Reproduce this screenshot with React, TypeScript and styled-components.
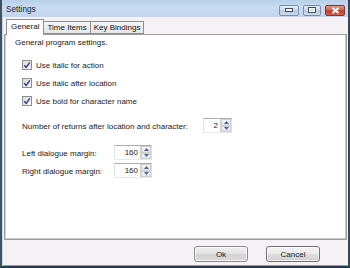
import React from "react";
import styled, { createGlobalStyle } from "styled-components";

const GlobalStyle = createGlobalStyle`
  html, body { margin: 0; padding: 0; }
  body {
    width: 350px; height: 268px; overflow: hidden;
    font-family: "Liberation Sans", Arial, sans-serif;
    font-size: 8px; color: #1a1a1a;
  }
  * { box-sizing: border-box; }
`;

const Window = styled.div`
  width: 350px;
  height: 268px;
  display: flex;
  flex-direction: column;
  background: #c3d7ee;
  border-left: 2px solid #44515f;
  border-right: 2px solid #3a4756;
  border-bottom: 2px solid #2a3a4c;
`;

const TitleBar = styled.div`
  height: 17px;
  flex: none;
  display: flex;
  align-items: center;
  padding: 0 3px 0 4px;
  background: linear-gradient(#b7cfe9, #c8dbf0 40%, #c0d5ed);
`;

const Title = styled.span`
  flex: 1;
  font-size: 8.2px;
  color: #1c2430;
  padding-top: 2px;
`;

const CaptionGroup = styled.div`
  display: flex;
  align-items: center;
  gap: 4px;
  margin-top: 3px;
`;

const CaptionButton = styled.div<{ $w: number; $close?: boolean }>`
  width: ${(p) => p.$w}px;
  height: 11px;
  border-radius: 2px;
  border: 1px solid ${(p) => (p.$close ? "#7a3a34" : "#7b8ea8")};
  background: ${(p) =>
    p.$close
      ? "linear-gradient(#e59a8a, #d0604c 45%, #c23a26 55%, #d2644a)"
      : "linear-gradient(#e6eef8, #cdd9e9 45%, #b9c9de 55%, #cfdcec)"};
  display: flex;
  align-items: center;
  justify-content: center;
`;

const Body = styled.div`
  flex: 1;
  display: flex;
  flex-direction: column;
  margin: 0 0 0 1px;
  padding: 1px 1px 0 1px;
  background: #f5f1f5;
  border-bottom: 1px solid #3fbde9;
`;

const TabStrip = styled.div`
  display: flex;
  align-items: flex-end;
  padding-left: 2px;
  height: 16px;
  position: relative;
  z-index: 1;
`;

const Tab = styled.div<{ $active?: boolean }>`
  height: ${(p) => (p.$active ? 16 : 13)}px;
  padding: ${(p) => (p.$active ? "2px 4px 0" : "1px 3px 0")};
  margin-bottom: ${(p) => (p.$active ? -1 : 0)}px;
  border: 1px solid #8c8e94;
  border-bottom: ${(p) => (p.$active ? "none" : "1px solid #8c8e94")};
  margin-right: -1px;
  background: ${(p) => (p.$active ? "#ffffff" : "linear-gradient(#f4f4f4, #e6e6e6)")};
  display: flex;
  align-items: flex-start;
  white-space: nowrap;
  color: #111;
`;

const Panel = styled.div`
  height: 206px;
  flex: none;
  background: #fff;
  border: 1px solid #9c9c9c;
  box-shadow: inset 1px 0 0 #cfcfcf, inset -1px -1px 0 #c8c8c8;
  padding: 3px 10px 0 10px;
  display: flex;
  flex-direction: column;
`;

const Intro = styled.div`
  height: 10px;
  line-height: 10px;
`;

const CheckList = styled.div`
  margin-top: 8px;
  padding-left: 7px;
  display: flex;
  flex-direction: column;
`;

const CheckRow = styled.div`
  height: 18px;
  display: flex;
  align-items: center;
  gap: 4px;
`;

const CheckBoxBox = styled.div`
  width: 10px;
  height: 10px;
  border: 1px solid #8f8f8f;
  background: linear-gradient(135deg, #dcdcdc, #f8f8f8);
  display: flex;
  align-items: center;
  justify-content: center;
`;

const FieldRow = styled.div<{ $mt: number }>`
  margin-top: ${(p) => p.$mt}px;
  padding-left: 7px;
  height: 15px;
  display: flex;
  align-items: center;
`;

const FieldLabel = styled.div<{ $w: number }>`
  width: ${(p) => p.$w}px;
  padding-top: 2px;
  white-space: nowrap;
`;

const Spin = styled.div<{ $w: number }>`
  width: ${(p) => p.$w}px;
  height: 15px;
  display: flex;
  border: 1px solid #abadb3;
  border-left-color: #e2e3ea;
  border-right-color: #dbdfe6;
  border-bottom-color: #e3e9ef;
  background: #fff;
`;

const SpinValue = styled.div`
  flex: 1;
  text-align: right;
  padding-right: 2px;
  line-height: 13px;
`;

const SpinArrows = styled.div`
  width: 11px;
  display: flex;
  flex-direction: column;
  border-left: 1px solid #d6d6d6;
`;

const SpinHalf = styled.div`
  flex: 1;
  display: flex;
  align-items: center;
  justify-content: center;
  background: linear-gradient(#f7f7f7, #e4e4e4);
  border: 1px solid #cfcfcf;
`;

const Footer = styled.div`
  flex: 1;
  display: flex;
  justify-content: flex-end;
  align-items: flex-start;
  gap: 18px;
  padding: 6px 27px 0 0;
`;

const Button = styled.div<{ $default?: boolean }>`
  width: 54px;
  height: 16px;
  border: 1px solid ${(p) => (p.$default ? "#8a8a8a" : "#707070")};
  border-radius: 3px;
  background: ${(p) =>
    p.$default
      ? "linear-gradient(#f0f0f0, #e2e2e2 48%, #d2d2d2 52%, #d8d8d8)"
      : "linear-gradient(#f2f2f2, #ebebeb 48%, #dddddd 52%, #cfcfcf)"};
  box-shadow: inset 0 0 0 1px rgba(255,255,255,0.7);
  display: flex;
  align-items: center;
  justify-content: center;
  color: #222;
`;

const Check = () => (
  <svg width="8" height="8" viewBox="0 0 8 8">
    <path d="M1.2 4.2 L3.2 6.4 L6.8 1.4" fill="none" stroke="#2a3f8f" strokeWidth="1.5" />
  </svg>
);

const Arrow = ({ up }: { up?: boolean }) => (
  <svg width="5" height="3" viewBox="0 0 5 3">
    <path d={up ? "M0 3 L2.5 0 L5 3 Z" : "M0 0 L2.5 3 L5 0 Z"} fill="#4a64a8" />
  </svg>
);

const SpinBox = ({ value, w }: { value: string; w: number }) => (
  <Spin $w={w}>
    <SpinValue>{value}</SpinValue>
    <SpinArrows>
      <SpinHalf><Arrow up /></SpinHalf>
      <SpinHalf><Arrow /></SpinHalf>
    </SpinArrows>
  </Spin>
);

const checks = ["Use italic for action", "Use italic after location", "Use bold for character name"];

export default function App() {
  return (
    <>
      <GlobalStyle />
      <Window>
        <TitleBar>
          <Title>Settings</Title>
          <CaptionGroup>
            <CaptionButton $w={20}>
              <svg width="8" height="4" viewBox="0 0 8 4">
                <rect x="0.5" y="0.5" width="7" height="3" fill="#fff" stroke="#3b4a60" />
              </svg>
            </CaptionButton>
            <CaptionButton $w={18}>
              <svg width="8" height="6" viewBox="0 0 8 6">
                <rect x="0.5" y="0.5" width="7" height="5" fill="#fff" stroke="#3b4a60" />
                <rect x="2" y="2" width="4" height="2" fill="#cdd9e9" />
              </svg>
            </CaptionButton>
            <CaptionButton $w={20} $close>
              <svg width="9" height="7" viewBox="0 0 9 7">
                <path d="M1.5 1 L7.5 6 M7.5 1 L1.5 6" stroke="#fff" strokeWidth="2" />
              </svg>
            </CaptionButton>
          </CaptionGroup>
        </TitleBar>
        <Body>
          <TabStrip>
            <Tab $active>General</Tab>
            <Tab>Time Items</Tab>
            <Tab>Key Bindings</Tab>
          </TabStrip>
          <Panel>
            <Intro>General program settings.</Intro>
            <CheckList>
              {checks.map((c) => (
                <CheckRow key={c}>
                  <CheckBoxBox><Check /></CheckBoxBox>
                  <span>{c}</span>
                </CheckRow>
              ))}
            </CheckList>
            <FieldRow $mt={8}>
              <FieldLabel $w={181}>Number of returns after location and character:</FieldLabel>
              <SpinBox value="2" w={29} />
            </FieldRow>
            <FieldRow $mt={12}>
              <FieldLabel $w={92}>Left dialogue margin:</FieldLabel>
              <SpinBox value="160" w={38} />
            </FieldRow>
            <FieldRow $mt={3}>
              <FieldLabel $w={92}>Right dialogue margin:</FieldLabel>
              <SpinBox value="160" w={38} />
            </FieldRow>
          </Panel>
          <Footer>
            <Button $default>Ok</Button>
            <Button>Cancel</Button>
          </Footer>
        </Body>
      </Window>
    </>
  );
}
